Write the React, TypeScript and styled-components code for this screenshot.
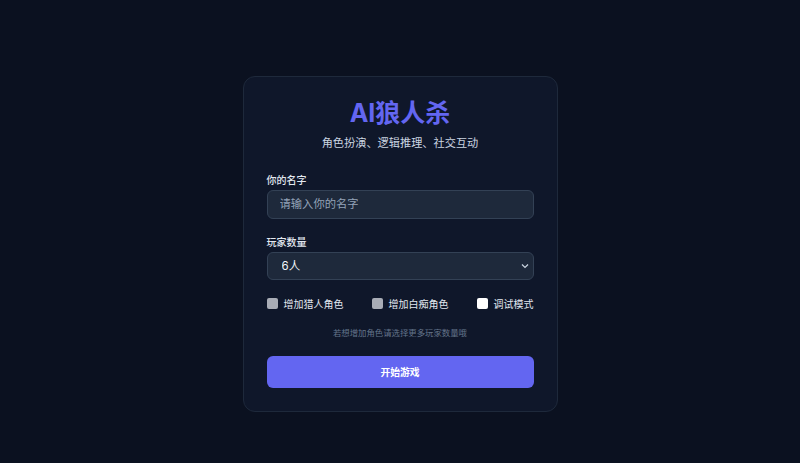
import React, { useState } from "react";
import styled, { createGlobalStyle } from "styled-components";

const GlobalStyle = createGlobalStyle`
  * {
    box-sizing: border-box;
  }

  html, body {
    margin: 0;
    padding: 0;
    background: #0b1120;
  }

  body {
    font-family: Inter, "Noto Sans CJK SC", sans-serif;
    color: #e2e8f0;
  }
`;

const Page = styled.div`
  width: 100%;
  height: 463px;
  padding-top: 24px;
  display: flex;
  align-items: center;
  justify-content: center;
  background: #0b1120;
`;

const Card = styled.div`
  width: 315px;
  padding: 20px 23px 23px;
  background: #0f172a;
  border: 1px solid #1e293b;
  border-radius: 12px;
`;

const Title = styled.h1`
  margin: 0;
  text-align: center;
  font-size: 25px;
  font-weight: 700;
  line-height: 32px;
  color: #6366f1;
`;

const Subtitle = styled.p`
  margin: 5px 0 0;
  text-align: center;
  font-size: 11.2px;
  line-height: 18px;
  color: #cbd5e1;
`;

const Field = styled.div<{ $top: number }>`
  display: flex;
  flex-direction: column;
  gap: 3px;
  margin-top: ${(p) => p.$top}px;
`;

const Label = styled.label`
  font-size: 10px;
  font-weight: 500;
  line-height: 14px;
  color: #e2e8f0;
`;

const Input = styled.input`
  height: 29px;
  padding: 0 12px;
  background: #1e293b;
  border: 1px solid #334155;
  border-radius: 6px;
  font-family: inherit;
  font-size: 11.3px;
  color: #e2e8f0;
  outline: none;

  &::placeholder {
    color: #94a3b8;
  }
`;

const SelectWrap = styled.div`
  position: relative;
`;

const Select = styled.select`
  width: 100%;
  height: 28px;
  padding: 0 14px;
  background: #1e293b;
  border: 1px solid #334155;
  border-radius: 6px;
  font-family: inherit;
  font-size: 11.5px;
  color: #f1f5f9;
  appearance: none;
  outline: none;
`;

const Chevron = styled.svg`
  position: absolute;
  right: 5px;
  top: 11px;
  pointer-events: none;
`;

const CheckRow = styled.div`
  display: flex;
  justify-content: space-between;
  align-items: center;
  margin-top: 16px;
`;

const CheckItem = styled.label`
  display: flex;
  align-items: center;
  gap: 6px;
  font-size: 10px;
  color: #e2e8f0;
`;

const Box = styled.span<{ $disabled?: boolean }>`
  width: 11px;
  height: 11px;
  border-radius: 2px;
  background: ${(p) => (p.$disabled ? "#a9adb6" : "#ffffff")};
  display: inline-block;
`;

const Hint = styled.p`
  margin: 16px 0 0;
  text-align: center;
  font-size: 8.4px;
  line-height: 12px;
  color: #64748b;
`;

const StartButton = styled.button`
  width: 100%;
  height: 32px;
  margin-top: 17px;
  background: #6366f1;
  border: none;
  border-radius: 6px;
  font-family: inherit;
  font-size: 9.8px;
  font-weight: 600;
  color: #ffffff;
  cursor: pointer;
`;

const App = () => {
  const [name, setName] = useState("");
  const [count, setCount] = useState("6");

  return (
    <>
      <GlobalStyle />
      <Page>
        <Card>
          <Title>AI狼人杀</Title>
          <Subtitle>角色扮演、逻辑推理、社交互动</Subtitle>

          <Field $top={21}>
            <Label>你的名字</Label>
            <Input
              placeholder="请输入你的名字"
              value={name}
              onChange={(e) => setName(e.target.value)}
            />
          </Field>

          <Field $top={16}>
            <Label>玩家数量</Label>
            <SelectWrap>
              <Select value={count} onChange={(e) => setCount(e.target.value)}>
                <option value="6">6人</option>
                <option value="8">8人</option>
                <option value="10">10人</option>
              </Select>
              <Chevron width="8" height="6" viewBox="0 0 8 6">
                <path d="M1 1.5l3 3 3-3" fill="none" stroke="#cbd5e1" strokeWidth="1.2" />
              </Chevron>
            </SelectWrap>
          </Field>

          <CheckRow>
            <CheckItem>
              <Box $disabled />
              增加猎人角色
            </CheckItem>
            <CheckItem>
              <Box $disabled />
              增加白痴角色
            </CheckItem>
            <CheckItem>
              <Box />
              调试模式
            </CheckItem>
          </CheckRow>

          <Hint>若想增加角色请选择更多玩家数量哦</Hint>

          <StartButton>开始游戏</StartButton>
        </Card>
      </Page>
    </>
  );
};

export default App;
